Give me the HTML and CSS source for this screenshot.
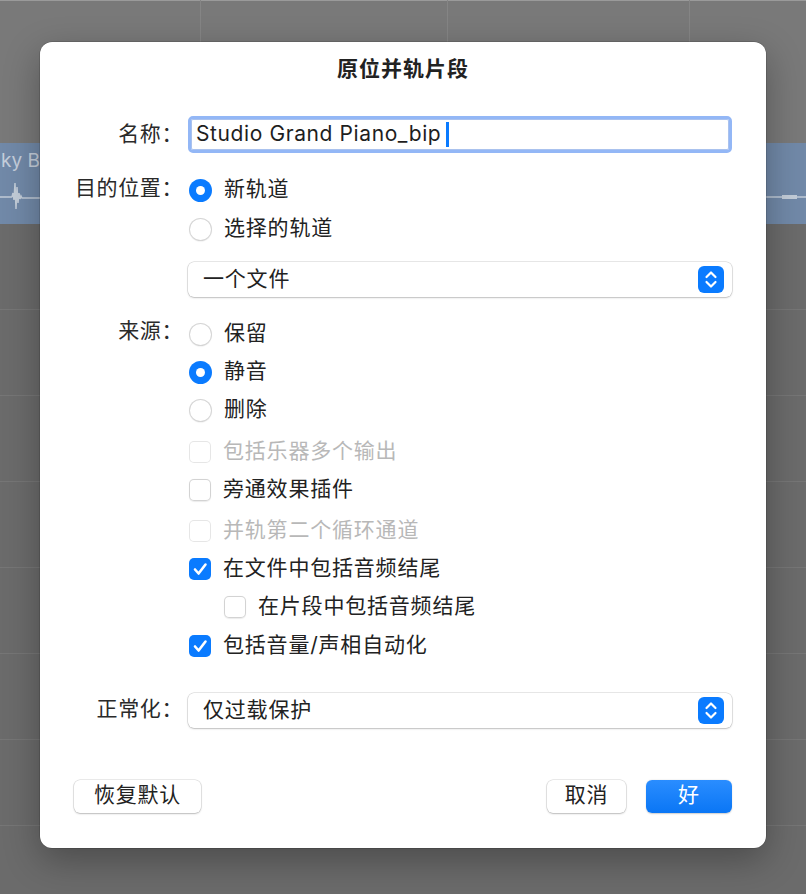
FILE: index.html
```html
<!DOCTYPE html>
<html lang="zh-CN">
<head>
<meta charset="utf-8">
<title>原位并轨片段</title>
<link rel="stylesheet" href="styles.css">
</head>
<body>
<div class="bg">
  <div class="bg-top"></div>
  <div class="strip">
    <div class="strip-left">
      <span class="region-name">ky Bounce</span>
      <svg class="wave" width="40" height="40" viewBox="0 0 40 40">
        <path d="M0 24 H12 M12 24 L13 20 L14 27 L15 10 L16 36 L17 14 L18 30 L19 20 L20 26 L21 23 L22 25 H40" stroke="#c2ccd8" stroke-width="1.5" fill="none"/>
      </svg>
    </div>
    <div class="strip-right">
      <svg class="wave" width="40" height="40" viewBox="0 0 40 40">
        <path d="M0 24 H40" stroke="#c2ccd8" stroke-width="1.5" fill="none"/>
        <rect x="16" y="22" width="15" height="4" fill="#c2ccd8"/>
      </svg>
    </div>
  </div>
  <div class="bg-bottom"></div>
</div>

<div class="dialog">
  <div class="title">原位并轨片段</div>

  <div class="row row-name">
    <div class="label label-field">名称：</div>
    <div class="field">
      <span class="field-text">Studio Grand Piano_bip</span><span class="caret"></span>
    </div>
  </div>

  <div class="row row-dest">
    <div class="label label-dest">目的位置：</div>
    <div class="controls">
      <div class="opt opt39"><span class="radio on"></span><span class="txt">新轨道</span></div>
      <div class="opt opt39"><span class="radio"></span><span class="txt">选择的轨道</span></div>
      <div class="popup popup-dest">
        <span class="popup-text">一个文件</span>
        <svg class="stepper" width="26" height="27" viewBox="0 0 26 27">
          <rect width="26" height="27" rx="6" fill="#0a7bff"/>
          <path d="M8.5 11 L13 6.5 L17.5 11 M8.5 16 L13 20.5 L17.5 16" stroke="#fff" stroke-width="2.2" fill="none" stroke-linecap="round" stroke-linejoin="round"/>
        </svg>
      </div>
    </div>
  </div>

  <div class="row row-src">
    <div class="label label-src">来源：</div>
    <div class="controls">
      <div class="opt"><span class="radio"></span><span class="txt">保留</span></div>
      <div class="opt"><span class="radio on"></span><span class="txt">静音</span></div>
      <div class="opt"><span class="radio"></span><span class="txt">删除</span></div>
      <div class="opt dis mt4"><span class="cb"></span><span class="txt">包括乐器多个输出</span></div>
      <div class="opt"><span class="cb"></span><span class="txt">旁通效果插件</span></div>
      <div class="opt dis mt3"><span class="cb"></span><span class="txt">并轨第二个循环通道</span></div>
      <div class="opt"><span class="cb on"><svg width="22" height="22" viewBox="0 0 22 22"><path d="M6 11.5 L9.6 15.5 L16.5 6.5" stroke="#fff" stroke-width="2.6" fill="none" stroke-linecap="round" stroke-linejoin="round"/></svg></span><span class="txt">在文件中包括音频结尾</span></div>
      <div class="opt indent"><span class="cb"></span><span class="txt">在片段中包括音频结尾</span></div>
      <div class="opt mt1"><span class="cb on"><svg width="22" height="22" viewBox="0 0 22 22"><path d="M6 11.5 L9.6 15.5 L16.5 6.5" stroke="#fff" stroke-width="2.6" fill="none" stroke-linecap="round" stroke-linejoin="round"/></svg></span><span class="txt">包括音量/声相自动化</span></div>
    </div>
  </div>

  <div class="row row-norm">
    <div class="label label-norm">正常化：</div>
    <div class="controls">
      <div class="popup">
        <span class="popup-text">仅过载保护</span>
        <svg class="stepper" width="26" height="27" viewBox="0 0 26 27">
          <rect width="26" height="27" rx="6" fill="#0a7bff"/>
          <path d="M8.5 11 L13 6.5 L17.5 11 M8.5 16 L13 20.5 L17.5 16" stroke="#fff" stroke-width="2.2" fill="none" stroke-linecap="round" stroke-linejoin="round"/>
        </svg>
      </div>
    </div>
  </div>

  <div class="buttons">
    <div class="btn btn-reset">恢复默认</div>
    <div class="btn-group">
      <div class="btn btn-cancel">取消</div>
      <div class="btn btn-ok">好</div>
    </div>
  </div>
</div>
</body>
</html>
```

FILE: styles.css
```css
html, body {
  margin: 0;
  padding: 0;
}
body {
  width: 806px;
  height: 894px;
  overflow: hidden;
  position: relative;
  font-family: "Inter", "Noto Sans CJK SC", sans-serif;
  font-size: 21px;
  color: #222;
  background: #6b6b6b;
}

/* background DAW */
.bg {
  display: flex;
  flex-direction: column;
  height: 894px;
}
.bg-top {
  height: 143px;
  flex: none;
  background-color: #797979;
  background-image:
    linear-gradient(to right, transparent 200px, #858585 200px, #858585 201px, transparent 201px),
    linear-gradient(to right, transparent 447px, #858585 447px, #858585 448px, transparent 448px),
    linear-gradient(to right, transparent 689px, #858585 689px, #858585 690px, transparent 690px),
    linear-gradient(to bottom, #9a9a9a 0, #9a9a9a 1px, transparent 1px);
}
.strip {
  height: 81px;
  flex: none;
  background: #7189a8;
  display: flex;
  justify-content: space-between;
}
.strip-left, .strip-right {
  width: 40px;
  display: flex;
  flex-direction: column;
}
.region-name {
  font-family: "Inter", sans-serif;
  font-size: 19px;
  color: #c5cedb;
  line-height: 20px;
  margin-top: 8px;
  margin-left: 1px;
  white-space: nowrap;
}
.strip-right .wave {
  margin-top: 30px;
}
.wave {
  display: block;
  flex: none;
}
.strip-left .wave {
  margin-top: 2px;
}
.bg-bottom {
  flex: 1;
  background-color: #6b6b6b;
  background-image: repeating-linear-gradient(to bottom, transparent 0, transparent 85px, #767676 85px, #767676 86px);
}

/* dialog */
.dialog {
  position: absolute;
  left: 40px;
  top: 42px;
  width: 726px;
  height: 806px;
  box-sizing: border-box;
  padding: 15px 34px 35px;
  background: #fff;
  border-radius: 12px;
  box-shadow: 0 0 0 0.5px rgba(0, 0, 0, 0.25), 0 12px 36px rgba(0, 0, 0, 0.3);
  display: flex;
  flex-direction: column;
}
.title {
  text-align: center;
  font-weight: 700;
  line-height: 24px;
  letter-spacing: 1px;
  color: #222;
}

.row {
  display: flex;
}
.label {
  width: 114px;
  box-sizing: border-box;
  padding-right: 5px;
  flex: none;
  text-align: right;
  white-space: nowrap;
  letter-spacing: 0.6px;
  color: #2a2a2a;
}
.controls {
  flex: 1;
  display: flex;
  flex-direction: column;
}

.row-name {
  margin-top: 35px;
}
.label-field {
  line-height: 36px;
}
.field {
  flex: 1;
  height: 37px;
  box-sizing: border-box;
  border: 3px solid #93b7f6;
  border-radius: 5px;
  box-shadow: inset 0 0 0 1px #aac2ee;
  display: flex;
  align-items: center;
  padding-left: 5px;
}
.field-text {
  color: #1e1e1e;
  letter-spacing: 0.6px;
  padding-bottom: 2px;
}
.caret {
  display: inline-block;
  width: 3px;
  height: 25px;
  background: #0a7bff;
  margin-left: 5px;
}

.row-dest {
  margin-top: 17px;
}
.label-dest {
  line-height: 35px;
}
.opt {
  height: 38px;
  display: flex;
  align-items: center;
  gap: 12px;
  padding-left: 1px;
}
.opt39 {
  height: 39px;
}
.txt {
  letter-spacing: 0.8px;
  color: #222;
  white-space: nowrap;
  padding-bottom: 5px;
}
.dis .txt {
  color: #b8b8b8;
}
.dis .cb {
  box-shadow: inset 0 0 0 1px #e6e6e6;
}
.mt4 { margin-top: 4px; }
.mt3 { margin-top: 3px; }
.mt1 { margin-top: 1px; }
.indent {
  padding-left: 36px;
}

.radio {
  width: 23px;
  height: 23px;
  flex: none;
  border-radius: 50%;
  background: #fff;
  box-shadow: inset 0 0 0 1px #d5d5d5, 0 0.5px 1px rgba(0, 0, 0, 0.08);
  display: flex;
  align-items: center;
  justify-content: center;
  margin-top: 2px;
}
.radio.on {
  background: #0a7bff;
  box-shadow: none;
}
.radio.on::after {
  content: "";
  width: 9px;
  height: 9px;
  border-radius: 50%;
  background: #fff;
}
.cb {
  width: 22px;
  height: 22px;
  flex: none;
  border-radius: 5px;
  background: #fff;
  box-shadow: inset 0 0 0 1px #d3d3d3, 0 0.5px 1px rgba(0, 0, 0, 0.08);
  display: flex;
  margin-top: 1px;
}
.cb.on {
  background: #0a7bff;
  box-shadow: none;
}

.popup {
  height: 35px;
  box-sizing: border-box;
  border-radius: 6px;
  background: #fff;
  box-shadow: 0 0 0 0.5px rgba(0, 0, 0, 0.18), 0 1px 2px rgba(0, 0, 0, 0.18);
  display: flex;
  align-items: center;
  justify-content: space-between;
  padding: 0 8px 0 15px;
}
.popup-dest {
  margin-top: 14px;
}
.popup-text {
  letter-spacing: 0.8px;
  color: #222;
  padding-bottom: 5px;
}
.stepper {
  display: block;
  flex: none;
}

.row-src {
  margin-top: 17px;
}
.label-src {
  line-height: 34px;
}

.row-norm {
  margin-top: 29px;
}
.label-norm {
  line-height: 31px;
}

.buttons {
  margin-top: auto;
  display: flex;
  justify-content: space-between;
  align-items: center;
}
.btn-group {
  display: flex;
  gap: 20px;
}
.btn {
  height: 33px;
  line-height: 30px;
  text-align: center;
  border-radius: 6px;
  background: #fff;
  box-shadow: 0 0 0 0.5px rgba(0, 0, 0, 0.16), 0 1px 2px rgba(0, 0, 0, 0.2);
  letter-spacing: 0.8px;
  color: #222;
}
.btn-reset { width: 127px; }
.btn-cancel { width: 79px; }
.btn-ok {
  width: 86px;
  color: #fff;
  background: linear-gradient(to bottom, #2a8dff, #0a76f5);
  box-shadow: 0 0.5px 1.5px rgba(0, 0, 0, 0.2);
}
```
